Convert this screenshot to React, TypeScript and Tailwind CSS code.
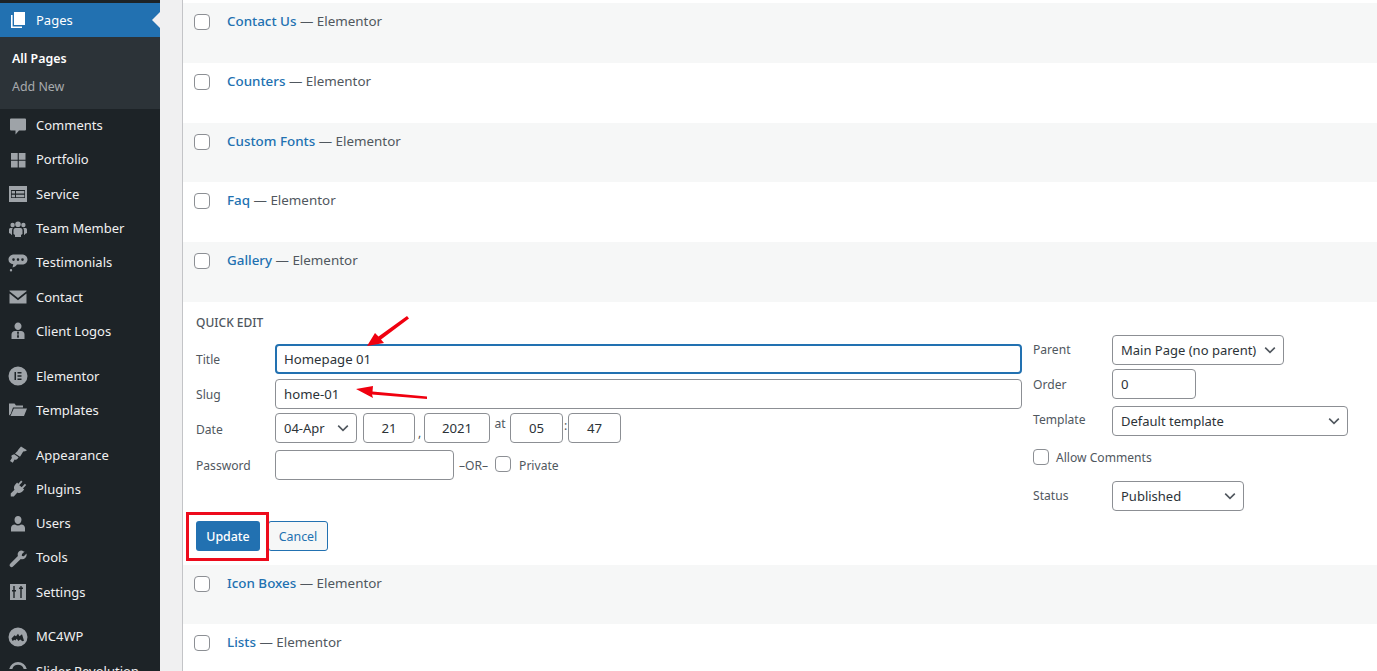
import type { ReactNode } from "react";

const ICON = "#9ea3a8";

function Icon({ children, className = "" }: { children: ReactNode; className?: string }) {
  return (
    <svg viewBox="0 0 20 20" fill={ICON} className={`h-5 w-5 shrink-0 ${className}`}>
      {children}
    </svg>
  );
}

const icons: Record<string, ReactNode> = {
  comments: <path d="M3 2.500h14a1 1 0 0 1 1 1v10a1 1 0 0 1-1 1h-6l-3.500 4v-4H3a1 1 0 0 1-1-1v-10a1 1 0 0 1 1-1z" />,
  portfolio: <path d="M3 3h6.700v6.700H3zM10.800 3h6.700v6.700h-6.700zM3 10.800h6.700v6.700H3zM10.800 10.800h6.700v6.700h-6.700z" />,
  service: (
    <path
      fillRule="evenodd"
      d="M1 2h18v16H1zM3 6v8h14V6zM3.700 7h3.300v2.500H3.700zM3.700 10.800h3.300v2.500H3.700zM8 7h8.300v2.500H8zM8 10.800h8.300v2.500H8z"
    />
  ),
  team: (
    <path d="M10 2.500a2.800 2.800 0 1 1 0 5.600 2.800 2.800 0 0 1 0-5.600zM4.600 3.800a2.200 2.200 0 1 1 0 4.400 2.200 2.200 0 0 1 0-4.400zM15.400 3.800a2.200 2.200 0 1 1 0 4.400 2.200 2.200 0 0 1 0-4.400zM7.500 9h5c1.400 0 2 1 2 2.400V15l-1.500 1v2H7v-2l-1.500-1v-3.600C5.500 10 6.100 9 7.500 9zM1 10.500C1 9.500 1.800 9 2.600 9h2.200C4.200 9.800 4 10.800 4 12v3.500l-1 .5v-1l-2-1zM19 10.500c0-1-.8-1.500-1.600-1.500h-2.200c.6.800.8 1.800.8 3v3.500l1 .5v-1l2-1z" />
  ),
  testimonials: (
    <path
      fillRule="evenodd"
      d="M6 1.500h8c3 0 5.500 2 5.500 5s-2.500 5-5.500 5H9c-1 1.500-2.500 2.500-4.500 3l.8-3.200C2.500 11 .5 9.300.5 6.500s2.500-5 5.500-5zM5.500 5.300a1.300 1.300 0 1 0 0 2.600 1.300 1.300 0 0 0 0-2.600zM10 5.300a1.300 1.300 0 1 0 0 2.600 1.300 1.300 0 0 0 0-2.600zM14.500 5.300a1.300 1.300 0 1 0 0 2.600 1.300 1.300 0 0 0 0-2.600zM3 16a1.200 1.200 0 1 1 0 2.400A1.200 1.200 0 0 1 3 16z"
    />
  ),
  contact: (
    <path d="M1.500 3h17v.800L10 10.500 1.500 3.800zM1.500 6 10 12.700 18.500 6v10h-17z" transform="translate(0 .5)" />
  ),
  logos: (
    <path
      fillRule="evenodd"
      d="M10 1.500a3.500 3.500 0 0 1 3.500 3.800c0 2-1.500 3.700-3.500 3.700S6.500 7.300 6.500 5.300A3.500 3.500 0 0 1 10 1.500zM7 10h6c2 0 3.500 1.500 3.500 3.500V18h-13v-4.500C3.500 11.500 5 10 7 10zM9.400 10.500 9 12l.6 1-.6 3 1 1.200 1-1.200-.6-3 .6-1-.4-1.500z"
    />
  ),
  elementor: (
    <path
      fillRule="evenodd"
      d="M10 .5a9.500 9.500 0 1 1 0 19 9.500 9.500 0 0 1 0-19zM6.500 6v8h1.500V6zM9.500 6v1.500h4V6zM9.500 9.200v1.600h4V9.200zM9.500 12.500V14h4v-1.500z"
    />
  ),
  templates: <path d="M1 15.500V3.500h5.500l1.500 2h7v2H5L2.700 14zM5.800 8.500H19l-3 7.500H2.500z" />,
  appearance: (
    <path d="M13 1.500 19 5.200l-1.800 1-2 .3-1.500 2.500-1.700 2.800L7 8.500l2.300-2.300 1.300-2zM6.200 9.300l4.400 3-1.300 1.700c-.7.800-1.800.8-2.700.5l-1.800 3.300-2.800-1.700 2-3.300c-.6-.8-.8-1.700-.2-2.500z" />
  ),
  plugins: (
    <path d="m13.100 1.500 1.400 1.200-3.200 3.500 2.400 2.100 3.200-3.500 1.300 1.200-3.200 3.500 1.200 1.100-1.800 2c-1.400 1.500-3.400 1.800-5 .9l-3.600 4-3-.1-.1-3 3.800-3.600c-1-1.600-.6-3.700.8-5.200l1.800-2 1.200 1.100z" />
  ),
  users: (
    <path d="M10 2c2 0 3.500 1.500 3.500 3.700S12 10 10 10 6.500 8 6.500 5.700 8 2 10 2zM7 10.600c.8.600 1.900 1 3 1s2.200-.4 3-1c2.500.2 4 1.600 4 3.400v3.500H3V14c0-1.800 1.500-3.200 4-3.400z" />
  ),
  tools: (
    <path d="M16.700 3.400 14 6.100l-.2 1.900 2 .2 2.700-2.700c.4 1.700-.1 3.300-1.300 4.400-1.200 1.200-2.900 1.500-4.400 1l-7.800 7.700c-.8.800-2 .8-2.800 0-.8-.8-.8-2 0-2.800l7.700-7.800c-.5-1.500-.2-3.200 1-4.400 1.200-1.200 2.900-1.700 4.800-.2z" />
  ),
  settings: (
    <path
      fillRule="evenodd"
      d="M2 2h16v16H2zM5.300 4v4H4v1.500h1.300V16h1.400V9.500H8V8H6.700V4zM12.300 4v1.500H11V7h1.300v9h1.400V7H15V5.500h-1.300V4z"
    />
  ),
  mc4wp: (
    <path
      fillRule="evenodd"
      d="M10 .5a9.500 9.500 0 1 1 0 19 9.500 9.500 0 0 1 0-19zM3.500 11.500l1 2.500 2-1.200.8.800 1.500-1.800 1.500 2.200 2-1.500 2 1.800 1.700-.5-2-6.500-2.500 2-1.500-2.500-2 2.500-1.500-1z"
    />
  ),
  slider: (
    <path
      fillRule="evenodd"
      d="M10 1a9 9 0 0 1 8.800 7h-3.100A6 6 0 0 0 4.300 8H1.200A9 9 0 0 1 10 1z"
    />
  ),
};

type MenuEntry = { label: string; icon: string; gap?: boolean };

const menu: MenuEntry[] = [
  { label: "Comments", icon: "comments" },
  { label: "Portfolio", icon: "portfolio" },
  { label: "Service", icon: "service" },
  { label: "Team Member", icon: "team" },
  { label: "Testimonials", icon: "testimonials" },
  { label: "Contact", icon: "contact" },
  { label: "Client Logos", icon: "logos" },
  { label: "Elementor", icon: "elementor", gap: true },
  { label: "Templates", icon: "templates" },
  { label: "Appearance", icon: "appearance", gap: true },
  { label: "Plugins", icon: "plugins" },
  { label: "Users", icon: "users" },
  { label: "Tools", icon: "tools" },
  { label: "Settings", icon: "settings" },
  { label: "MC4WP", icon: "mc4wp", gap: true },
  { label: "Slider Revolution", icon: "slider" },
];

function Sidebar() {
  return (
    <aside className="h-[671px] w-40 shrink-0 overflow-hidden bg-[#1d2327] pt-[3px] text-[13px] text-[#f0f0f1]">
      <div className="relative flex h-[34px] items-center gap-[8px] bg-[#2271b1] pl-[8px] text-white">
        <svg viewBox="0 0 20 20" fill="#fff" className="h-5 w-5 shrink-0">
          <path d="M6 2h11v13H6z" />
          <path d="M3 5h1.600v11.400H14V18H3z" />
        </svg>
        <span className="leading-none">Pages</span>
        <span className="absolute right-0 top-[9px] h-0 w-0 border-y-[8px] border-r-[8px] border-y-transparent border-r-[#f0f0f1]" />
      </div>
      <div className="flex h-[71.5px] flex-col gap-[10px] bg-[#2c3338] pl-3 pt-[13px] text-[12.400px] leading-[18px]">
        <div className="font-semibold text-white">All Pages</div>
        <div className="text-[#a7aaad]">Add New</div>
      </div>
      {menu.map((item) => (
        <div
          key={item.label}
          className={`flex h-[34.3px] items-center gap-[8px] pl-[8px] ${item.gap ? "mt-[10.4px]" : ""}`}
        >
          <Icon>{icons[item.icon]}</Icon>
          <span className="whitespace-nowrap leading-none">{item.label}</span>
        </div>
      ))}
    </aside>
  );
}

function Checkbox() {
  return <span className="block h-4 w-4 shrink-0 rounded-[4px] border border-[#8c8f94] bg-white" />;
}

function Row({ title, className }: { title: string; className: string }) {
  return (
    <div className={`flex items-start pl-[11px] pt-[11px] ${className}`}>
      <Checkbox />
      <div className="ml-[17px] mt-[-3px] text-[13.400px] leading-5 text-[#50575e]">
        <span className="font-medium text-[#2271b1]">{title}</span> — Elementor
      </div>
    </div>
  );
}

function Chevron() {
  return (
    <svg viewBox="0 0 20 20" className="h-[16px] w-[16px] shrink-0" fill="none" stroke="#50575e" strokeWidth={2}>
      <path d="m4 7 6 6 6-6" />
    </svg>
  );
}

function Select({ value, className }: { value: string; className: string }) {
  return (
    <div
      className={`flex h-[30px] items-center justify-between rounded-[4px] border border-[#8c8f94] bg-white pl-[8px] pr-[5px] text-[13px] text-[#2c3338] ${className}`}
    >
      <span className="mt-[1px] whitespace-nowrap">{value}</span>
      <Chevron />
    </div>
  );
}

function Field({ value = "", className, center }: { value?: string; className: string; center?: boolean }) {
  return (
    <div
      className={`flex h-[30px] items-center rounded-[4px] border border-[#8c8f94] bg-white pt-[2px] text-[13.200px] text-[#2c3338] ${center ? "justify-center" : "pl-[8px]"} ${className}`}
    >
      {value}
    </div>
  );
}

function QuickEdit() {
  return (
    <div className="relative h-[263px] bg-white text-[12.100px] text-[#50575e]">
      <div className="flex gap-[11px] pl-[13px]">
        <div className="w-[826px]">
          <div className="h-[42px] pt-[13px] text-[12px] font-medium leading-4 text-[#50575e]">QUICK EDIT</div>
          <div className="flex h-[35px] items-start">
            <div className="w-[79px] pt-[7px] leading-[18px]">Title</div>
            <div className="flex h-[30px] w-[747px] items-center rounded-[4px] border-2 border-[#2271b1] bg-white pl-[7px] pt-[2px] text-[13.200px] text-[#2c3338]">
              Homepage 01
            </div>
          </div>
          <div className="flex h-[34px] items-start">
            <div className="w-[79px] pt-[7px] leading-[18px]">Slug</div>
            <Field value="home-01" className="w-[747px]" />
          </div>
          <div className="flex h-[37px] items-start">
            <div className="w-[79px] pt-[8px] leading-[18px]">Date</div>
            <Select value="04-Apr" className="w-[82px]" />
            <Field value="21" center className="ml-[6px] w-[52px]" />
            <span className="w-[9px] pt-[11px] text-center leading-[18px]">,</span>
            <Field value="2021" center className="w-[66px]" />
            <span className="w-[20px] pt-[2px] text-center leading-[18px]">at</span>
            <Field value="05" center className="w-[53px]" />
            <span className="w-[5px] text-center leading-[26px]">:</span>
            <Field value="47" center className="w-[53px]" />
          </div>
          <div className="flex h-[30px] items-start">
            <div className="w-[79px] pt-[7px] leading-[18px]">Password</div>
            <Field className="w-[179px]" />
            <span className="ml-[5px] pt-[7px] leading-[18px]">–OR–</span>
            <span className="ml-[7px] pt-[6px]">
              <Checkbox />
            </span>
            <span className="ml-[8px] pt-[7px] leading-[18px]">Private</span>
          </div>
        </div>
        <div className="pt-[33px]">
          <div className="flex h-[34px] items-start">
            <div className="w-[79px] pt-[6px] leading-[18px]">Parent</div>
            <Select value="Main Page (no parent)" className="w-[172px]" />
          </div>
          <div className="flex h-[37px] items-start">
            <div className="w-[79px] pt-[7px] leading-[18px]">Order</div>
            <Field value="0" className="w-[84px]" />
          </div>
          <div className="flex h-[43px] items-start">
            <div className="w-[79px] pt-[5px] leading-[18px]">Template</div>
            <Select value="Default template" className="w-[236px]" />
          </div>
          <div className="flex h-[32px] items-start">
            <Checkbox />
            <span className="ml-[7px] mt-[1px] leading-4">Allow Comments</span>
          </div>
          <div className="flex items-start">
            <div className="w-[79px] pt-[6px] leading-[18px]">Status</div>
            <Select value="Published" className="w-[132px]" />
          </div>
        </div>
      </div>
      <div className="mt-[10px] flex gap-2 pl-[13px]">
        <div className="flex h-[30px] w-[64px] items-center justify-center rounded-[3px] bg-[#2271b1] pt-[2px] text-[12.400px] font-medium text-white">
          Update
        </div>
        <div className="flex h-[30px] w-[60px] items-center justify-center rounded-[3px] border border-[#2271b1] bg-[#f6f7f7] pt-[2px] text-[12.400px] text-[#2271b1]">
          Cancel
        </div>
      </div>
      {/* annotations drawn on top of the screenshot */}
      <div className="absolute left-[3px] top-[210px] h-[49px] w-[83px] border-[3px] border-[#ed0b1c]" />
      <svg className="absolute left-[160px] top-[8px] h-[100px] w-[100px]" viewBox="0 0 100 100" fill="#f0000f">
        <path d="M24 36 32 23l3.500 3.500L64 6l2 2.500-28 21L41 33z" />
        <path d="M13 79 30 76l-.5 5.500L84 86.500V89l-55-4.500L30 88z" />
      </svg>
    </div>
  );
}

export default function App() {
  return (
    <div className="flex h-[671px] w-[1377px] overflow-hidden bg-[#f0f0f1] font-['Noto_Sans','Open_Sans',sans-serif]">
      <Sidebar />
      <main className="ml-[22px] flex-1 border-l border-[#c3c4c7] bg-white pt-[3px]">
        <Row title="Contact Us" className="h-[60px] bg-[#f6f7f7]" />
        <Row title="Counters" className="h-[60px] bg-white" />
        <Row title="Custom Fonts" className="h-[59px] bg-[#f6f7f7]" />
        <Row title="Faq" className="h-[60px] bg-white" />
        <Row title="Gallery" className="h-[60px] bg-[#f6f7f7]" />
        <QuickEdit />
        <Row title="Icon Boxes" className="h-[59px] bg-[#f6f7f7]" />
        <Row title="Lists" className="h-[60px] bg-white" />
      </main>
    </div>
  );
}
